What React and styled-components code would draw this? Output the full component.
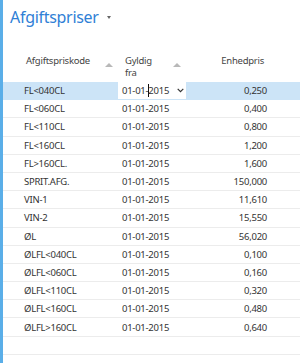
import styled, { createGlobalStyle } from 'styled-components';

const rows = [
  ['FL<040CL', '01-01-2015', '0,250'],
  ['FL<060CL', '01-01-2015', '0,400'],
  ['FL<110CL', '01-01-2015', '0,800'],
  ['FL<160CL', '01-01-2015', '1,200'],
  ['FL>160CL.', '01-01-2015', '1,600'],
  ['SPRIT.AFG.', '01-01-2015', '150,000'],
  ['VIN-1', '01-01-2015', '11,610'],
  ['VIN-2', '01-01-2015', '15,550'],
  ['ØL', '01-01-2015', '56,020'],
  ['ØLFL<040CL', '01-01-2015', '0,100'],
  ['ØLFL<060CL', '01-01-2015', '0,160'],
  ['ØLFL<110CL', '01-01-2015', '0,320'],
  ['ØLFL<160CL', '01-01-2015', '0,480'],
  ['ØLFL>160CL', '01-01-2015', '0,640'],
];

export default function App() {
  return (
    <>
      <GlobalStyle />
      <Page>
        <SideBar />
        <Content>
          <TitleRow>
            <Title>Afgiftspriser</Title>
            <TitleCaret />
          </TitleRow>
          <Grid>
            <HeadCell>
              <HeadText>Afgiftspriskode</HeadText>
              <SortArrow />
            </HeadCell>
            <HeadCell $pad="7px">
              <HeadText>
                Gyldig
                <br />
                fra
              </HeadText>
              <SortArrow />
            </HeadCell>
            <HeadCell $right>
              <HeadText>Enhedpris</HeadText>
            </HeadCell>

            {rows.map(([code, date, price], index) => {
              const selected = index === 0;
              return (
                <Row key={index} $selected={selected}>
                  <CodeCell>{code}</CodeCell>
                  <DateCell $editing={selected}>
                    {selected ? (
                      <>
                        <span>01-01-</span>
                        <Cursor />
                        <span>2015</span>
                        <Chevron viewBox="0 0 7 5">
                          <path d="M0.7 0.9 L3.5 3.7 L6.3 0.9" fill="none" stroke="#333" strokeWidth="1.2" />
                        </Chevron>
                      </>
                    ) : (
                      date
                    )}
                  </DateCell>
                  <PriceCell>{price}</PriceCell>
                </Row>
              );
            })}
            <Row>
              <CodeCell />
              <DateCell />
              <PriceCell />
            </Row>
          </Grid>
        </Content>
      </Page>
    </>
  );
}

const GlobalStyle = createGlobalStyle`
  body {
    margin: 0;
    background: #fff;
    font-family: 'Noto Sans', 'Open Sans', sans-serif;
  }
`;

const Page = styled.div`
  display: flex;
  width: 300px;
  height: 363px;
  overflow: hidden;
`;

const SideBar = styled.div`
  flex-shrink: 0;
  width: 3px;
  background: #5aaee8;
`;

const Content = styled.div`
  flex: 1;
  display: flex;
  flex-direction: column;
`;

const TitleRow = styled.div`
  display: flex;
  align-items: center;
  gap: 8px;
  height: 40px;
  padding-left: 7px;
  padding-bottom: 6px;
  box-sizing: border-box;
`;

const Title = styled.h1`
  margin: 0;
  color: #2f80d6;
  font-size: 16px;
  font-weight: normal;
  letter-spacing: -0.3px;
`;

const TitleCaret = styled.span`
  width: 0;
  height: 0;
  border-left: 2.5px solid transparent;
  border-right: 2.5px solid transparent;
  border-top: 3px solid #666;
  margin-top: 1px;
`;

const Grid = styled.div`
  display: grid;
  grid-template-columns: 115px 68px 1fr;
  grid-auto-rows: 18.2px;
  grid-template-rows: 42px;
  color: #333;
  font-size: 9.5px;
  letter-spacing: -0.25px;
`;

const HeadCell = styled.div`
  display: flex;
  align-items: flex-start;
  justify-content: ${(p) => (p.$right ? 'flex-end' : 'space-between')};
  padding: 15px ${(p) => (p.$right ? '36px' : '5px')} 0 ${(p) => p.$pad || '23px'};
  color: #444;
`;

const HeadText = styled.div`
  line-height: 12px;
`;

const SortArrow = styled.span`
  width: 0;
  height: 0;
  margin-top: 8px;
  border-left: 4px solid transparent;
  border-right: 4px solid transparent;
  border-bottom: 4px solid #b8b8b8;
`;

const Row = styled.div`
  display: contents;

  & > div {
    background: ${(p) => (p.$selected ? '#cce4f7' : '#fff')};
    border-bottom: 1px solid ${(p) => (p.$selected ? '#cce4f7' : '#ececec')};
  }
`;

const Cell = styled.div`
  display: flex;
  align-items: center;
  box-sizing: border-box;
  white-space: nowrap;
`;

const CodeCell = styled(Cell)`
  padding-left: 21px;
`;

const DateCell = styled(Cell)`
  padding-left: 4px;
  ${(p) => p.$editing && '&& { background: #fff; }'}
`;

const PriceCell = styled(Cell)`
  justify-content: flex-end;
  padding-right: 33px;
`;

const Cursor = styled.span`
  display: inline-block;
  width: 1px;
  height: 13px;
  margin-right: -1px;
  background: #111;
`;

const Chevron = styled.svg`
  width: 7px;
  height: 5px;
  margin-left: 8px;
`;
